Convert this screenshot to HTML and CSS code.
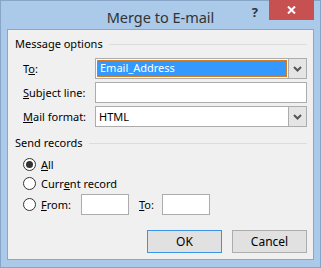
FILE: index.html
```html
<!DOCTYPE html>
<html lang="en">
  <head>
    <meta charset="UTF-8" />
    <title>Merge to E-mail</title>
    <link rel="stylesheet" href="styles.css">
  </head>
  <body>
    <div class="window">
      <div class="titlebar">
        <span></span>
        <span class="title">Merge to E-mail</span>
        <div class="controls">
          <span class="help">?</span>
          <span class="close">
            <svg width="9" height="8" viewBox="0 0 9 8">
              <path d="M1 0.5 L8 7.5 M8 0.5 L1 7.5" stroke="#fff" stroke-width="2" />
            </svg>
          </span>
        </div>
      </div>

      <div class="client">
        <div class="group-head"><span>Message options</span></div>

        <div class="fields">
          <label>T<u>o</u>:</label>
          <div class="combo">
            <div class="combo-value"><span class="selected">Email_Address</span></div>
            <span class="drop">
              <svg width="9" height="6" viewBox="0 0 9 6"><path d="M1 1 L4.5 4.5 L8 1" fill="none" stroke="#555" stroke-width="2" /></svg>
            </span>
          </div>

          <label><u>S</u>ubject line:</label>
          <div class="textbox"></div>

          <label><u>M</u>ail format:</label>
          <div class="combo">
            <div class="combo-value plain">HTML</div>
            <span class="drop">
              <svg width="9" height="6" viewBox="0 0 9 6"><path d="M1 1 L4.5 4.5 L8 1" fill="none" stroke="#555" stroke-width="2" /></svg>
            </span>
          </div>
        </div>

        <div class="group-head second"><span>Send records</span></div>

        <div class="radios">
          <div class="radio-row">
            <span class="radio checked"></span>
            <span><u>A</u>ll</span>
          </div>
          <div class="radio-row">
            <span class="radio"></span>
            <span>Curr<u>e</u>nt record</span>
          </div>
          <div class="radio-row range">
            <span class="radio"></span>
            <span class="from-label"><u>F</u>rom:</span>
            <div class="textbox small"></div>
            <span class="to-label"><u>T</u>o:</span>
            <div class="textbox small"></div>
          </div>
        </div>

        <div class="buttons">
          <button class="default">OK</button>
          <button>Cancel</button>
        </div>
      </div>
    </div>
  </body>
</html>
```

FILE: styles.css
```css
body {
  margin: 0;
  background-color: #abc9e8;
  font-family: "Noto Sans", "DejaVu Sans", sans-serif;
  font-size: 11px;
  color: #000;
}

.window {
  width: 321px;
  height: 268px;
  box-sizing: border-box;
  border: 1px solid #86a5c9;
  background-color: #abc9e8;
  display: flex;
  flex-direction: column;
}

.titlebar {
  height: 28px;
  display: grid;
  grid-template-columns: 1fr auto 1fr;
  align-items: start;
}

.title {
  font-size: 14.5px;
  color: #333;
  line-height: 20px;
  padding-top: 6px;
}

.controls {
  display: flex;
  justify-content: flex-end;
  align-items: flex-start;
  padding-right: 6px;
}

.help {
  font-weight: bold;
  font-size: 13px;
  color: #333;
  line-height: 14px;
  padding-top: 4px;
  margin-right: 11px;
}

.close {
  width: 45px;
  height: 20px;
  margin-top: -1px;
  background-color: #c75050;
  display: flex;
  justify-content: center;
  align-items: center;
}

.client {
  margin: 0 6px 0 6px;
  height: 231px;
  box-sizing: border-box;
  border: 1px solid #8ba7c7;
  background-color: #f0f0f0;
  padding: 6px 6px 6px 7px;
  display: flex;
  flex-direction: column;
}

.group-head {
  display: flex;
  align-items: center;
  height: 16px;
  line-height: 16px;
}

.group-head::after {
  content: "";
  flex: 1;
  height: 1px;
  background-color: #dcdcdc;
  margin-left: 6px;
}

.group-head.second {
  margin-top: 8px;
}

.fields {
  display: grid;
  grid-template-columns: 72px 1fr;
  grid-auto-rows: 21px;
  row-gap: 3px;
  margin-top: 6px;
  padding-left: 8px;
  align-items: center;
}

.combo {
  height: 21px;
  box-sizing: border-box;
  border: 1px solid #acacac;
  background-color: #fff;
  display: flex;
}

.combo-value {
  flex: 1;
  padding: 1px;
}

.combo-value.plain {
  padding: 2px 0 0 3px;
  line-height: 16px;
}

.selected {
  display: block;
  height: 17px;
  box-sizing: border-box;
  background-color: #3399ff;
  color: #fff;
  border: 1px dotted #d9822b;
  padding-left: 2px;
  line-height: 14px;
}

.drop {
  width: 17px;
  background-color: #e5e5e5;
  border-left: 1px solid #acacac;
  display: flex;
  justify-content: center;
  align-items: center;
}

.textbox {
  height: 21px;
  box-sizing: border-box;
  border: 1px solid #acacac;
  background-color: #fff;
}

.radios {
  display: flex;
  flex-direction: column;
  margin-top: 4px;
  padding-left: 8px;
}

.radio-row {
  height: 19px;
  display: flex;
  align-items: center;
}

.radio-row.range {
  height: 21px;
  margin-top: 1px;
}

.radio {
  width: 13px;
  height: 13px;
  box-sizing: border-box;
  border: 1px solid #333;
  border-radius: 50%;
  background-color: #fff;
  margin-right: 5px;
  display: flex;
  justify-content: center;
  align-items: center;
}

.radio.checked::after {
  content: "";
  width: 7px;
  height: 7px;
  border-radius: 50%;
  background-color: #333;
}

.from-label {
  width: 40px;
}

.textbox.small {
  width: 48px;
  height: 21px;
}

.to-label {
  margin: 0 8px 0 10px;
}

.buttons {
  display: flex;
  justify-content: flex-end;
  gap: 10px;
  margin-top: 15px;
}

button {
  width: 75px;
  height: 23px;
  font-family: inherit;
  font-size: 12px;
  color: #000;
  background-color: #e1e1e1;
  border: 1px solid #adadad;
  padding: 0;
}

button.default {
  border-color: #3c94e4;
}
```
